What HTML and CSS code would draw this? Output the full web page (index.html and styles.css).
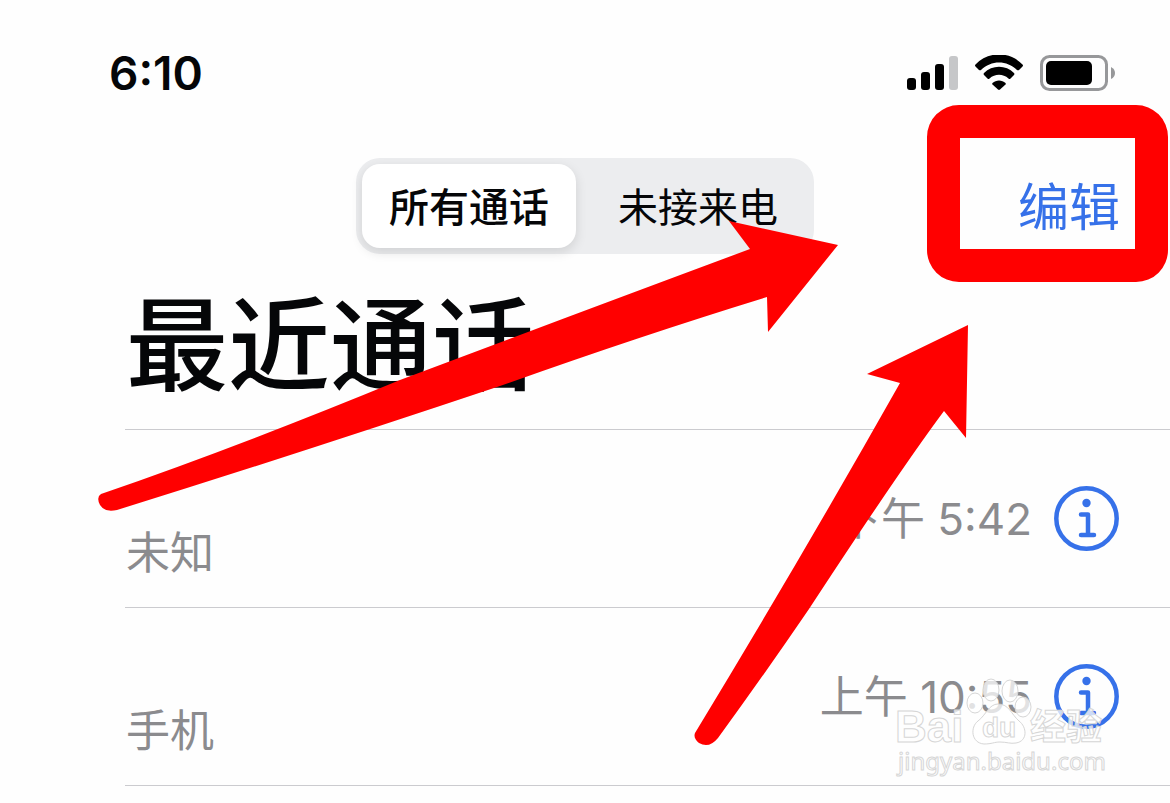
FILE: index.html
```html
<!DOCTYPE html>
<html lang="zh-CN">
<head>
<meta charset="utf-8">
<meta name="viewport" content="width=device-width, initial-scale=1">
<title>最近通话</title>
<link rel="stylesheet" href="styles.css">
</head>
<body>
<div class="screen">
  <header class="status">
    <time class="clock">6:10</time>
    <div class="indicators">
      <svg class="signal" width="52" height="36" viewBox="0 0 52 36" aria-hidden="true">
        <rect x="1" y="23" width="9" height="12" rx="3"/>
        <rect x="15" y="17" width="9" height="18" rx="3"/>
        <rect x="29" y="9" width="9" height="26" rx="3"/>
        <rect x="43" y="1" width="9" height="34" rx="3" fill="#c6c7c9"/>
      </svg>
      <svg class="wifi" width="50" height="36" viewBox="0 0 50 36" aria-hidden="true">
        <path d="M1.500 9.500C14-4 36-4 48.500 9.500Q49.500 10.500 48.500 11.500L45 15Q44 15.700 43 15C33 5 17 5 7 15Q6 15.700 5 15L1.500 11.500Q.5 10.500 1.500 9.500Z"/>
        <path d="M10 18C18 9.500 32 9.500 40 18Q41 19 40 20L36.500 23.500Q35.500 24.500 34.500 23.500C29 18.500 21 18.500 15.500 23.500Q14.500 24.500 13.500 23.500L10 20Q9 19 10 18Z"/>
        <path d="M18.500 28C22 24.500 28 24.500 31.500 28Q32.200 28.800 31.500 29.500L26 34.600Q25 35.500 24 34.600L18.500 29.500Q17.800 28.800 18.500 28Z"/>
      </svg>
      <svg class="battery" width="76" height="36" viewBox="0 0 76 36" aria-hidden="true">
        <rect x="1.500" y="1.500" width="65" height="33" rx="8" fill="none" stroke="#97989a" stroke-width="3"/>
        <rect x="6" y="6" width="46" height="24" rx="5"/>
        <path d="M71 12Q75 14 75 18T71 24Z" fill="#97989a"/>
      </svg>
    </div>
  </header>

  <nav class="toolbar">
    <div class="segments">
      <label class="segment"><input type="radio" name="filter" checked><span>所有通话</span></label>
      <label class="segment"><input type="radio" name="filter"><span>未接来电</span></label>
    </div>
    <button class="edit" type="button">编辑</button>
  </nav>

  <main>
    <h1 class="title">最近通话</h1>
    <ul class="calls">
      <li class="call">
        <span class="kind">未知</span>
        <time class="when">下午 5:42</time>
        <button class="info" type="button" aria-label="详细信息">
          <svg width="65" height="65" viewBox="0 0 65 65" fill="none" stroke="#3671e9" stroke-width="4.500" stroke-linecap="round" stroke-linejoin="round">
            <circle cx="32.500" cy="32.500" r="30.200"/>
            <circle cx="32.500" cy="17" r="4.200" fill="#3671e9" stroke="none"/>
            <path d="M27 28.500H34V49M27 49H40"/>
          </svg>
        </button>
      </li>
      <li class="call">
        <span class="kind">手机</span>
        <time class="when">上午 10:55</time>
        <button class="info" type="button" aria-label="详细信息">
          <svg width="65" height="65" viewBox="0 0 65 65" fill="none" stroke="#3671e9" stroke-width="4.500" stroke-linecap="round" stroke-linejoin="round">
            <circle cx="32.500" cy="32.500" r="30.200"/>
            <circle cx="32.500" cy="17" r="4.200" fill="#3671e9" stroke="none"/>
            <path d="M27 28.500H34V49M27 49H40"/>
          </svg>
        </button>
      </li>
    </ul>
  </main>

  <svg class="watermark" width="220" height="110" viewBox="890 670 220 110" aria-hidden="true">
    <g class="mark">
      <ellipse cx="975" cy="703" rx="8" ry="10"/>
      <ellipse cx="991" cy="690" rx="8" ry="11"/>
      <ellipse cx="1010" cy="691" rx="8" ry="11"/>
      <ellipse cx="1023" cy="707" rx="8" ry="10"/>
      <path d="M998 704C989 704 986 715 978 721C970 727 971 743 984 744C992 744 994 742 1000 742C1007 742 1010 744 1016 743C1028 741 1027 727 1019 721C1011 714 1009 704 998 704Z"/>
    </g>
    <text class="mark brand" x="895" y="742">Bai</text>
    <text class="mark du" x="982" y="737">du</text>
    <text class="mark jingyan" x="1030" y="740">经验</text>
    <text class="mark site" x="898" y="770">jingyan.baidu.com</text>
  </svg>

  <svg class="arrows" width="1170" height="803" viewBox="0 0 1170 803" fill="#f00" aria-hidden="true">
    <path d="M101 494Q240 446 400 380Q570 316 750 249L729 221L838 245L768 332L767 297Q640 336 500 386Q300 453 117 510Q105 513 100 505Q96 497 101 494Z"/>
    <path d="M695 733Q800 560 900 383L867 374L968 325L966 438L944 411Q900 470 809 609Q766 672 718 738Q709 749 699 743Q693 738 695 733Z"/>
  </svg>
  <div class="highlight"></div>
</div>
</body>
</html>
```
FILE: styles.css
```css
* {
  box-sizing: border-box;
}

body {
  margin: 0;
  background: #fefefe;
  color: #050608;
  font-family: Inter, "Noto Sans CJK SC", sans-serif;
}

button {
  padding: 0;
  border: 0;
  background: none;
  font: inherit;
  cursor: pointer;
}

.screen {
  position: relative;
  min-height: 100vh;
  overflow: hidden;
}

.status {
  display: flex;
  align-items: center;
  justify-content: space-between;
  padding: 43px 54px 0 109px;
}

.clock {
  font-size: 46px;
  font-weight: 600;
  line-height: 60px;
}

.indicators {
  display: flex;
  gap: 16px;
}

.toolbar {
  display: grid;
  grid-template-columns: 1fr auto 1fr;
  align-items: center;
  padding: 55px 50px 0;
}

.segments {
  grid-column: 2;
  display: flex;
  height: 96px;
  padding: 6px;
  border-radius: 24px;
  background: #ecedef;
}

.segment {
  display: flex;
  font-size: 40px;
}

.segment input {
  position: absolute;
  opacity: 0;
}

.segment span {
  display: flex;
  align-items: center;
  padding: 0 30px 2px 28px;
  border-radius: 18px;
}

.segment input:checked + span {
  padding: 0 27px 2px;
  margin-right: 14px;
  background: #fff;
  font-weight: 500;
  box-shadow: 0 4px 12px #0000001f;
}

.edit {
  justify-self: end;
  padding-top: 3px;
  color: #3671e9;
  font-size: 51px;
  line-height: 72px;
}

.title {
  margin: 0;
  padding: 18px 0 0 126px;
  font-size: 102px;
  font-weight: 500;
  line-height: 148px;
}

.calls {
  margin: 9px 0 0 125px;
  padding: 0;
  border-top: 1px solid #cbcbcf;
  list-style: none;
}

.call {
  display: flex;
  align-items: center;
  height: 178px;
  padding-right: 51px;
  border-bottom: 1px solid #cbcbcf;
  color: #8b8b8e;
  font-size: 44px;
  line-height: 60px;
}

.kind {
  flex: 1;
  padding: 68px 0 0 1px;
}

.when {
  margin-right: 22px;
}

.info,
.info svg {
  display: block;
}

.watermark {
  position: absolute;
  top: 670px;
  right: 60px;
}

.mark {
  fill: #ffffffc0;
  stroke: #d6d6d6;
  stroke-width: 1;
}

.brand {
  font: 700 44px "Liberation Sans", sans-serif;
}

.du {
  font: 700 28px "Liberation Sans", sans-serif;
}

.jingyan {
  font: 700 36px "Noto Sans CJK SC", sans-serif;
}

.site {
  font: 400 24px "Noto Sans", sans-serif;
}

.arrows {
  position: absolute;
  top: 0;
  left: 0;
  pointer-events: none;
}

.highlight {
  position: absolute;
  top: 105px;
  right: 2px;
  width: 241px;
  height: 177px;
  border: 33px solid #f00;
  border-radius: 32px;
  pointer-events: none;
}
```
